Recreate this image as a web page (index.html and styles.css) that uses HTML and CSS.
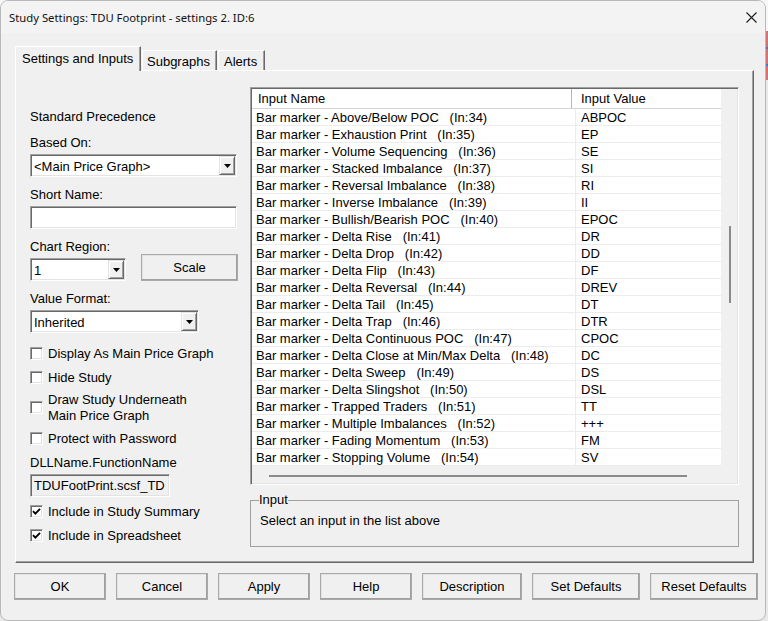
FILE: index.html
```html
<!DOCTYPE html>
<html>
<head>
<meta charset="utf-8">
<title>Study Settings</title>
<link rel="stylesheet" href="styles.css">
</head>
<body>
<div class="window">
  <div class="titlebar">
    <span class="title">Study Settings: TDU Footprint - settings 2. ID:6</span>
    <svg class="close" width="11" height="11" viewBox="0 0 11 11"><path d="M0.5 0.5L10.5 10.5M10.5 0.5L0.5 10.5" stroke="#1b1b1b" stroke-width="1.1" fill="none"/></svg>
  </div>
  <div class="tabs">
    <div class="tab tab-active">Settings and Inputs</div>
    <div class="tab tab-sub">Subgraphs</div>
    <div class="tab tab-alerts">Alerts</div>
  </div>
  <div class="panel">
    <div class="left">
      <div class="lbl m-std">Standard Precedence</div>
      <div class="lbl m-10">Based On:</div>
      <div class="combo combo-based m-4"><span class="combo-text">&lt;Main Price Graph&gt;</span><span class="dd"><svg width="7" height="4" viewBox="0 0 7 4"><path d="M0 0H7L3.5 4Z" fill="#000"/></svg></span></div>
      <div class="lbl m-9">Short Name:</div>
      <div class="textbox m-4"></div>
      <div class="lbl m-9">Chart Region:</div>
      <div class="region-row">
        <div class="combo combo-region"><span class="combo-text">1</span><span class="dd"><svg width="7" height="4" viewBox="0 0 7 4"><path d="M0 0H7L3.5 4Z" fill="#000"/></svg></span></div>
        <div class="btn btn-scale">Scale</div>
      </div>
      <div class="lbl m-9">Value Format:</div>
      <div class="combo combo-format m-4"><span class="combo-text">Inherited</span><span class="dd"><svg width="7" height="4" viewBox="0 0 7 4"><path d="M0 0H7L3.5 4Z" fill="#000"/></svg></span></div>
      <div class="cb m-12"><span class="box"></span><span class="cb-text">Display As Main Price Graph</span></div>
      <div class="cb m-8"><span class="box"></span><span class="cb-text">Hide Study</span></div>
      <div class="cb cb-2 m-6"><span class="box"></span><span class="cb-text">Draw Study Underneath<br>Main Price Graph</span></div>
      <div class="cb m-7"><span class="box"></span><span class="cb-text">Protect with Password</span></div>
      <div class="lbl m-8">DLLName.FunctionName</div>
      <div class="textbox dll m-4">TDUFootPrint.scsf_TD</div>
      <div class="cb m-6"><span class="box"><svg width="9" height="9" viewBox="0 0 9 9"><path d="M1 4.2L3.4 6.6L8 1.8" stroke="#000" stroke-width="1.9" fill="none"/></svg></span><span class="cb-text">Include in Study Summary</span></div>
      <div class="cb m-8"><span class="box"><svg width="9" height="9" viewBox="0 0 9 9"><path d="M1 4.2L3.4 6.6L8 1.8" stroke="#000" stroke-width="1.9" fill="none"/></svg></span><span class="cb-text">Include in Spreadsheet</span></div>
    </div>
    <div class="right">
      <div class="listbox">
        <div class="lv">
          <div class="lv-head"><div class="h-name">Input Name</div><div class="h-value">Input Value</div></div>
          <div class="row"><div class="c-name">Bar marker - Above/Below POC   (In:34)</div><div class="c-value">ABPOC</div></div>
          <div class="row"><div class="c-name">Bar marker - Exhaustion Print   (In:35)</div><div class="c-value">EP</div></div>
          <div class="row"><div class="c-name">Bar marker - Volume Sequencing   (In:36)</div><div class="c-value">SE</div></div>
          <div class="row"><div class="c-name">Bar marker - Stacked Imbalance   (In:37)</div><div class="c-value">SI</div></div>
          <div class="row"><div class="c-name">Bar marker - Reversal Imbalance   (In:38)</div><div class="c-value">RI</div></div>
          <div class="row"><div class="c-name">Bar marker - Inverse Imbalance   (In:39)</div><div class="c-value">II</div></div>
          <div class="row"><div class="c-name">Bar marker - Bullish/Bearish POC   (In:40)</div><div class="c-value">EPOC</div></div>
          <div class="row"><div class="c-name">Bar marker - Delta Rise   (In:41)</div><div class="c-value">DR</div></div>
          <div class="row"><div class="c-name">Bar marker - Delta Drop   (In:42)</div><div class="c-value">DD</div></div>
          <div class="row"><div class="c-name">Bar marker - Delta Flip   (In:43)</div><div class="c-value">DF</div></div>
          <div class="row"><div class="c-name">Bar marker - Delta Reversal   (In:44)</div><div class="c-value">DREV</div></div>
          <div class="row"><div class="c-name">Bar marker - Delta Tail   (In:45)</div><div class="c-value">DT</div></div>
          <div class="row"><div class="c-name">Bar marker - Delta Trap   (In:46)</div><div class="c-value">DTR</div></div>
          <div class="row"><div class="c-name">Bar marker - Delta Continuous POC   (In:47)</div><div class="c-value">CPOC</div></div>
          <div class="row"><div class="c-name">Bar marker - Delta Close at Min/Max Delta   (In:48)</div><div class="c-value">DC</div></div>
          <div class="row"><div class="c-name">Bar marker - Delta Sweep   (In:49)</div><div class="c-value">DS</div></div>
          <div class="row"><div class="c-name">Bar marker - Delta Slingshot   (In:50)</div><div class="c-value">DSL</div></div>
          <div class="row"><div class="c-name">Bar marker - Trapped Traders   (In:51)</div><div class="c-value">TT</div></div>
          <div class="row"><div class="c-name">Bar marker - Multiple Imbalances   (In:52)</div><div class="c-value">+++</div></div>
          <div class="row"><div class="c-name">Bar marker - Fading Momentum   (In:53)</div><div class="c-value">FM</div></div>
          <div class="row"><div class="c-name">Bar marker - Stopping Volume   (In:54)</div><div class="c-value">SV</div></div>
        </div>
        <div class="vscroll"><div class="vthumb"></div></div>
        <div class="hscroll"><div class="hthumb"></div></div>
        <div class="corner"></div>
      </div>
      <fieldset class="group">
        <legend>Input</legend>
        <div class="group-text">Select an input in the list above</div>
      </fieldset>
    </div>
  </div>
  <div class="buttons">
    <div class="btn w92">OK</div>
    <div class="btn w92">Cancel</div>
    <div class="btn w92">Apply</div>
    <div class="btn w92">Help</div>
    <div class="btn w100">Description</div>
    <div class="btn w108">Set Defaults</div>
    <div class="btn w108">Reset Defaults</div>
  </div>
</div>
</body>
</html>
```

FILE: styles.css
```css
* { box-sizing: border-box; }

html, body {
  margin: 0;
  height: 100%;
}

body {
  background:
    linear-gradient(to bottom, #f7f7f7 0 31px, #d47272 31px 47px, #3d7bd0 47px 49px, #d47272 49px 64px, #3d7bd0 64px 66px, #d47272 66px 80px, #e9e9e9 80px 100%);
  font-family: "Liberation Sans", Arial, sans-serif;
  font-size: 13px;
  color: #000;
  overflow: hidden;
}

.window {
  width: 766px;
  height: 621px;
  border: 1px solid #b8b8b8;
  border-radius: 8px;
  background: #f0f0f0;
  overflow: hidden;
  display: flex;
  flex-direction: column;
}

.titlebar {
  flex: none;
  height: 32px;
  background: #f3f3f3;
  display: flex;
  align-items: center;
  justify-content: space-between;
  padding: 0 8px 0 8px;
}

.title {
  font-family: "Noto Sans", sans-serif;
  font-size: 11.3px;
  color: #111;
}

.close { display: block; }

/* tabs */
.tabs {
  flex: none;
  display: flex;
  align-items: flex-end;
  height: 24px;
  margin: 13px 0 0 14px;
}

.tab {
  background: #f0f0f0;
  border-top: 1px solid #fff;
  border-left: 1px solid #fff;
  border-right: 1px solid #696969;
  box-shadow: inset -1px 0 #a0a0a0;
  line-height: 16px;
  white-space: nowrap;
}

.tab-active {
  position: relative;
  z-index: 1;
  width: 126px;
  height: 25px;
  margin-bottom: -1px;
  padding: 4px 0 0 6px;
}

.tab-sub {
  width: 75px;
  height: 20px;
  margin-left: 1px;
  padding: 3px 0 0 4px;
}

.tab-alerts {
  width: 47px;
  height: 20px;
  margin-left: 1px;
  padding: 3px 0 0 5px;
}

/* panel */
.panel {
  flex: none;
  width: 739px;
  height: 493px;
  margin-left: 14px;
  border-top: 1px solid #fff;
  border-left: 1px solid #fff;
  border-right: 1px solid #696969;
  border-bottom: 1px solid #696969;
  box-shadow: inset -1px -1px #a0a0a0;
  display: flex;
  padding-left: 14px;
}

.left {
  width: 208px;
  flex: none;
}

.right {
  width: 489px;
  flex: none;
  margin-left: 12px;
}

.lbl {
  height: 16px;
  line-height: 18px;
  white-space: nowrap;
}

.m-std { margin-top: 37px; }
.m-4 { margin-top: 4px; }
.m-6 { margin-top: 6px; }
.m-7 { margin-top: 7px; }
.m-8 { margin-top: 8px; }
.m-9 { margin-top: 9px; }
.m-10 { margin-top: 10px; }
.m-12 { margin-top: 12px; }

.combo, .textbox, .box {
  border: 1px solid;
  border-color: #a0a0a0 #ffffff #ffffff #a0a0a0;
  box-shadow: inset 1px 1px #696969, inset -1px -1px #e3e3e3;
  background: #fff;
}

.combo {
  height: 23px;
  display: flex;
  align-items: center;
  padding: 1px 1px 1px 2px;
}

.combo-text {
  flex: 1;
  padding: 2px 0 0 1px;
  line-height: 16px;
  white-space: nowrap;
  overflow: hidden;
}

.combo-based { width: 207px; }
.combo-region { width: 96px; margin-top: 4px; }
.combo-format { width: 169px; }

.dd {
  flex: none;
  width: 16px;
  height: 19px;
  background: #f0f0f0;
  border: 1px solid;
  border-color: #e3e3e3 #696969 #696969 #e3e3e3;
  box-shadow: inset 1px 1px #fff, inset -1px -1px #a0a0a0;
  display: flex;
  align-items: center;
  justify-content: center;
}

.dd svg { display: block; margin-top: 1px; }

.textbox {
  width: 207px;
  height: 23px;
}

.textbox.dll {
  width: 140px;
  background: #f0f0f0;
  padding: 0 0 0 3px;
  line-height: 22px;
  white-space: nowrap;
  overflow: hidden;
}

.region-row {
  display: flex;
  align-items: flex-start;
  height: 27px;
}

.btn {
  height: 27px;
  background: #f0f0f0;
  border: 1px solid;
  border-color: #ffffff #696969 #696969 #ffffff;
  box-shadow: inset -1px -1px #a0a0a0, inset 1px 1px #e3e3e3;
  display: flex;
  align-items: center;
  justify-content: center;
  white-space: nowrap;
  outline: 1px solid #a9a9a9;
  outline-offset: -1px;
}

.btn-scale {
  width: 97px;
  margin-left: 15px;
}

.cb {
  display: flex;
  align-items: flex-start;
  height: 16px;
  white-space: nowrap;
}

.cb-2 { height: 32px; }

.cb-text {
  line-height: 16px;
  padding-top: 1px;
}

.box {
  flex: none;
  width: 13px;
  height: 13px;
  margin: 2px 5px 0 0;
  display: flex;
  align-items: center;
  justify-content: center;
}

.cb-2 .box { margin-top: 10px; }

.box svg { display: block; }

/* list view */
.listbox {
  margin-top: 16px;
  height: 398px;
  border: 1px solid;
  border-color: #a0a0a0 #ffffff #ffffff #a0a0a0;
  box-shadow: inset 1px 1px #696969, inset -1px -1px #e3e3e3;
  padding: 1px;
  background: #f0f0f0;
  display: grid;
  grid-template-columns: 469px 16px;
  grid-template-rows: 377px 17px;
}

.lv {
  overflow: hidden;
}

.lv-head {
  display: flex;
  height: 20px;
  background: #fff;
  border-bottom: 1px solid #d5d5d5;
  line-height: 19px;
}

.h-name {
  width: 320px;
  padding-left: 6px;
  border-right: 1px solid #b5b5b5;
}

.h-value {
  padding-left: 9px;
}

.row {
  display: flex;
  height: 17px;
  background: #fff;
  border-bottom: 1px solid #ececec;
  line-height: 18px;
}

.c-name {
  width: 324px;
  padding-left: 4px;
  border-right: 1px solid #ececec;
  white-space: pre;
  overflow: hidden;
}

.c-value {
  padding-left: 5px;
  white-space: nowrap;
}

.vscroll {
  background: #f0f0f0;
}

.vthumb {
  width: 2px;
  height: 77px;
  margin: 137px 0 0 8px;
  background: #8a8a8a;
}

.hscroll {
  background: #f0f0f0;
}

.hthumb {
  height: 2px;
  width: 418px;
  margin: 9px 0 0 17px;
  background: #8a8a8a;
}

.corner { background: #f0f0f0; }

/* group box */
.group {
  margin: 7px 0 0 0;
  width: 489px;
  min-width: 0;
  border: 1px solid #a0a0a0;
  padding: 0 8px 18px 8px;
}

.group legend {
  padding: 0;
  line-height: 16px;
  font-size: 13px;
}

.group-text {
  margin-top: 4px;
  padding-left: 1px;
  line-height: 18px;
  height: 16px;
}

/* bottom buttons */
.buttons {
  flex: none;
  display: flex;
  gap: 10px;
  margin-top: 10px;
  padding-left: 13px;
}

.w92 { width: 92px; }
.w100 { width: 100px; }
.w108 { width: 108px; }
```
